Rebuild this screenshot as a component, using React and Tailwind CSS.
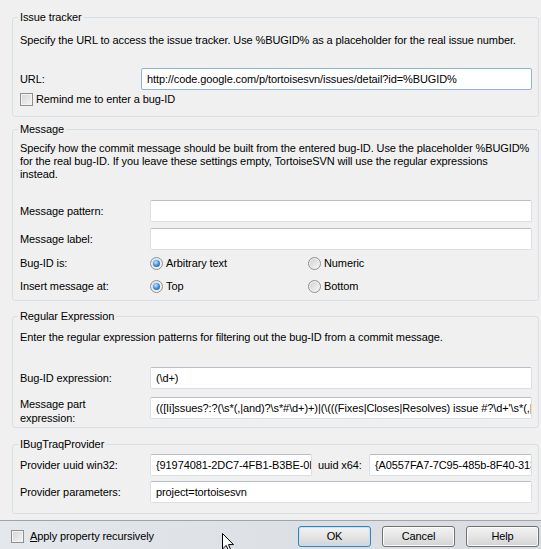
import React from 'react';

// Win7-style bits: group box, text field, radio, checkbox, push button
const Group = ({ title, className = '', children }) => (
  <fieldset className={`min-w-0 border border-[#d5dfe5] rounded-[3px] pl-[7px] pr-[6px] ${className}`}>
    <legend className="-ml-[2px] px-[2px] leading-[13px]">{title}</legend>
    {children}
  </fieldset>
);

const Field = ({ value = '', focused = false, className = '' }) => (
  <div
    className={`h-[22px] min-w-0 flex items-center bg-white border rounded-[2px] overflow-hidden whitespace-nowrap pl-[5px] ${
      focused ? 'border-[#8fb4dc] pl-[4px]' : 'border-[#dadfe6] border-t-[#b9bec6]'
    } ${className}`}
  >
    <span className="min-w-0 overflow-hidden">{value}</span>
  </div>
);

const Radio = ({ checked }) => (
  <span className="w-[13px] h-[13px] rounded-full border border-[#8e8f8f] bg-linear-to-br from-[#cfcfcf] to-[#f9f9f9] shadow-[inset_0_0_0_1px_#f2f2f2] flex items-center justify-center shrink-0">
    {checked && (
      <span className="w-[7px] h-[7px] rounded-full bg-[radial-gradient(circle_at_40%_35%,#c5ebff,#3d8fdc_50%,#0c4c94)]" />
    )}
  </span>
);

const Check = () => (
  <span className="w-[13px] h-[13px] border border-[#8e8f8f] bg-linear-to-br from-[#d4d4d4] to-[#f6f6f6] shadow-[inset_0_0_0_1px_#f4f4f4] shrink-0" />
);

const Button = ({ children, primary }) => (
  <div
    className={`w-[73px] h-[21px] flex items-center justify-center rounded-[3px] border bg-linear-to-b from-[#f2f2f2] via-[#e5e5e5] to-[#d3d3d3] ${
      primary ? 'border-[#3c7fb1] shadow-[inset_0_0_0_1px_#bfe6f8]' : 'border-[#707070] shadow-[inset_0_0_0_1px_#fbfbfb]'
    }`}
  >
    {children}
  </div>
);

const Row = ({ label, children, labelWidth = 'w-[130px]', className = '' }) => (
  <div className={`flex items-center ${className}`}>
    <div className={`${labelWidth} shrink-0`}>{label}</div>
    {children}
  </div>
);

const App = () => {
  return (
    <div className="w-[541px] h-[549px] bg-[#f0f0f0] flex flex-col text-[11px] leading-[13px] tracking-[-0.1px] text-black font-['Liberation_Sans',Arial,sans-serif] overflow-hidden">
      <div className="pl-[12px] pr-[2px]">
        {/* Issue tracker */}
        <Group title="Issue tracker" className="mt-[11px] pb-[10px]">
          <p className="mt-[10px]">
            Specify the URL to access the issue tracker. Use %BUGID% as a placeholder for the real issue number.
          </p>
          <Row label="URL:" labelWidth="w-[121px]" className="mt-[21px]">
            <Field focused className="flex-1" value="http://code.google.com/p/tortoisesvn/issues/detail?id=%BUGID%" />
          </Row>
          <div className="mt-[3px] flex items-center gap-[3px] h-[13px]">
            <Check />
            <span>Remind me to enter a bug-ID</span>
          </div>
        </Group>

        {/* Message */}
        <Group title="Message" className="mt-[6px] pb-[7px]">
          <p className="mt-[6px] whitespace-nowrap">
            Specify how the commit message should be built from the entered bug-ID. Use the placeholder %BUGID%
            <br />
            for the real bug-ID. If you leave these settings empty, TortoiseSVN will use the regular expressions
            <br />
            instead.
          </p>
          <Row label="Message pattern:" className="mt-[19px]">
            <Field className="flex-1" />
          </Row>
          <Row label="Message label:" className="mt-[6px]">
            <Field className="flex-1" />
          </Row>
          <Row label="Bug-ID is:" className="mt-[7px] h-[13px]">
            <div className="w-[158px] flex items-center gap-[3px]">
              <Radio checked />
              <span>Arbitrary text</span>
            </div>
            <div className="flex items-center gap-[3px]">
              <Radio />
              <span>Numeric</span>
            </div>
          </Row>
          <Row label="Insert message at:" className="mt-[10px] h-[13px]">
            <div className="w-[158px] flex items-center gap-[3px]">
              <Radio checked />
              <span>Top</span>
            </div>
            <div className="flex items-center gap-[3px]">
              <Radio />
              <span>Bottom</span>
            </div>
          </Row>
        </Group>

        {/* Regular Expression */}
        <Group title="Regular Expression" className="mt-[9px] pb-[8px]">
          <p className="mt-[8px]">Enter the regular expression patterns for filtering out the bug-ID from a commit message.</p>
          <Row label="Bug-ID expression:" className="mt-[23px]">
            <Field className="flex-1" value="(\d+)" />
          </Row>
          <div className="mt-[8px] flex items-start h-[22px]">
            <div className="w-[130px] shrink-0 leading-[14px]">
              Message part
              <br />
              expression:
            </div>
            <Field
              className="flex-1"
              value="(([Ii]ssues?:?(\s*(,|and)?\s*#\d+)+)|(\(((Fixes|Closes|Resolves) issue #?\d+'\s*(,|and)?\s*)+\)))"
            />
          </div>
        </Group>

        {/* IBugTraqProvider */}
        <Group title="IBugTraqProvider" className="mt-[10px] pb-[10px]">
          <Row label="Provider uuid win32:" className="mt-[3px]">
            <Field className="w-[162px] shrink-0" value="{91974081-2DC7-4FB1-B3BE-0DE1C8D6CE4E}" />
            <span className="ml-[6px] w-[51px] shrink-0">uuid x64:</span>
            <Field className="flex-1" value="{A0557FA7-7C95-485b-8F40-31303F762C57}" />
          </Row>
          <Row label="Provider parameters:" className="mt-[5px]">
            <Field className="flex-1" value="project=tortoisesvn" />
          </Row>
        </Group>
      </div>

      {/* Bottom bar */}
      <div className="relative mt-auto h-[29px] border-t border-[#9ea4aa] bg-linear-to-r from-[#e4e7eb] via-[#dde1e6] to-[#d8dce1] flex items-start pt-[5px]">
        <div className="ml-[11px] mt-[4px] flex items-center gap-[6px] h-[13px]">
          <Check />
          <span>
            <span className="underline">A</span>pply property recursively
          </span>
        </div>
        <div className="ml-auto mr-[2px] flex gap-[11px]">
          <Button primary>OK</Button>
          <Button>Cancel</Button>
          <Button>Help</Button>
        </div>
        <svg className="absolute left-[222px] top-[12px]" width="13" height="20" viewBox="0 0 13 20">
          <path d="M0.5 0.5 L0.5 16 L4.2 12.4 L6.8 18.5 L9 17.6 L6.5 11.6 L11.5 11.6 Z" fill="#fff" stroke="#000" strokeWidth="1" />
        </svg>
      </div>
    </div>
  );
};

export default App;
